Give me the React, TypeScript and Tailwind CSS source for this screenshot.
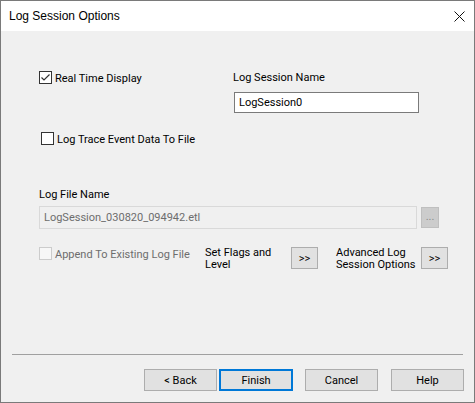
function CheckBox({ checked = false, disabled = false }: { checked?: boolean; disabled?: boolean }) {
    return (
        <span
            className={`w-[13px] h-[13px] shrink-0 border flex items-center justify-center ${
                disabled ? "border-[#cccccc] bg-[#f7f7f7]" : "border-[#333333] bg-white"
            }`}
        >
            {checked && (
                <svg width="11" height="11" viewBox="0 0 11 11">
                    <path d="M1.5 5.5 L4 8 L9.5 2.5" fill="none" stroke="#333333" strokeWidth="1.2" />
                </svg>
            )}
        </span>
    );
}

function DlgButton({ label, primary = false, className = "" }: { label: string; primary?: boolean; className?: string }) {
    return (
        <button
            className={`h-[22px] shrink-0 bg-[#e1e1e1] text-black flex items-center justify-center ${
                primary ? "border-2 border-[#0078d7]" : "border border-[#adadad]"
            } ${className}`}
        >
            {label}
        </button>
    );
}

export default function App() {
    return (
        <div
            className="w-[475px] h-[403px] border border-[#7a7a7a] flex flex-col bg-[#f0f0f0] text-[11px] leading-[13px] text-black"
            style={{ fontFamily: 'Roboto, "Liberation Sans", Arial, sans-serif' }}
        >
            {/* Title bar */}
            <div className="h-[30px] bg-white flex items-center justify-between pl-2 pr-[9px] shrink-0">
                <span className="text-[12px]" style={{ fontFamily: '"Liberation Sans", Arial, sans-serif' }}>
                    Log Session Options
                </span>
                <svg width="11" height="11" viewBox="0 0 11 11" className="mt-[1px]">
                    <path d="M0.5 0.5 L10.5 10.5 M10.5 0.5 L0.5 10.5" stroke="#111111" strokeWidth="1" fill="none" />
                </svg>
            </div>

            {/* Body */}
            <div className="flex-1 flex flex-col pl-[38px] pr-[35px]">
                {/* Real time + session name */}
                <div className="flex mt-[40px]">
                    <div className="w-[194px] shrink-0 flex items-start gap-[3px]">
                        <CheckBox checked />
                        <span className="mt-[1px]">Real Time Display</span>
                    </div>
                    <div className="flex flex-col">
                        <span>Log Session Name</span>
                        <input
                            readOnly
                            value="LogSession0"
                            className="mt-[8px] ml-[1px] w-[185px] h-[21px] border border-[#7a7a7a] bg-white px-[4px] outline-none"
                        />
                    </div>
                </div>

                {/* Trace to file */}
                <div className="flex items-start gap-[3px] mt-[19px] ml-[2px]">
                    <CheckBox />
                    <span className="mt-[1px]">Log Trace Event Data To File</span>
                </div>

                {/* Log file name */}
                <span className="mt-[42px]">Log File Name</span>
                <div className="flex items-center gap-[4px] mt-[5px]">
                    <input
                        readOnly
                        value="LogSession_030820_094942.etl"
                        className="w-[378px] h-[23px] shrink-0 border border-[#d9d9d9] bg-[#f0f0f0] text-[#6d6d6d] px-[4px] outline-none"
                    />
                    <button className="w-[18px] h-[21px] shrink-0 bg-[#cccccc] border border-[#bfbfbf] text-[#8a8a8a] leading-none flex items-end justify-center pb-[5px]">
                        ...
                    </button>
                </div>

                {/* Options row */}
                <div className="flex items-start mt-[18px]">
                    <div className="w-[166px] shrink-0 flex items-start gap-[3px]">
                        <CheckBox disabled />
                        <span className="mt-[1px] text-[#6d6d6d] whitespace-nowrap">Append To Existing Log File</span>
                    </div>
                    <span className="w-[86px] shrink-0 leading-[12px]">
                        Set Flags and
                        <br />
                        Level
                    </span>
                    <DlgButton label=">>" className="w-[27px] h-[21px]" />
                    <span className="w-[85px] shrink-0 ml-[18px] leading-[12px]">
                        Advanced Log
                        <br />
                        Session Options
                    </span>
                    <DlgButton label=">>" className="w-[27px] h-[21px]" />
                </div>
            </div>

            {/* Separator */}
            <div className="mx-[11px] h-px bg-[#a0a0a0]" />

            {/* Footer buttons */}
            <div className="flex justify-end pr-[10px] mt-[14px] mb-[11px]">
                <DlgButton label="< Back" className="w-[73px]" />
                <DlgButton label="Finish" primary className="w-[74px] ml-[2px]" />
                <DlgButton label="Cancel" className="w-[73px] ml-[12px]" />
                <DlgButton label="Help" className="w-[73px] ml-[13px]" />
            </div>
        </div>
    );
}
